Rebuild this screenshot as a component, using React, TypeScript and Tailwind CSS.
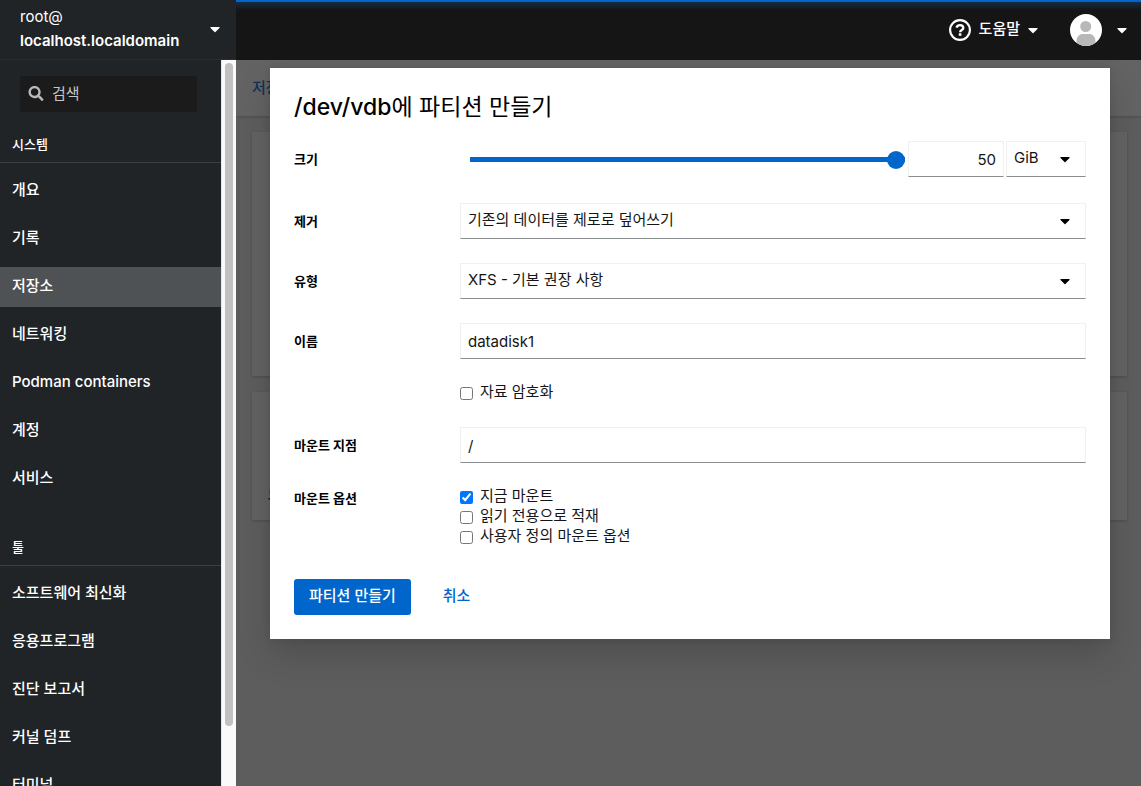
import React, { useState } from 'react';
import { FaCaretDown, FaSearch } from 'react-icons/fa';

const systemItems = ['개요', '기록', '저장소', '네트워킹', 'Podman containers', '계정', '서비스'];
const toolItems = ['소프트웨어 최신화', '응용프로그램', '진단 보고서', '커널 덤프', '터미널'];

const fieldClass =
  'h-9 border border-[#f0f0f0] border-b-[#8a8d90] bg-white px-[7px] text-[15px] text-[#151515] outline-none focus:border-b-[#06c]';

const NavGroup: React.FC<{ title: string; items: string[]; active?: string }> = ({ title, items, active }) => (
  <section>
    <h2 className="border-b border-[#3c3f42] px-3 pt-[22px] pb-2 text-[13px] leading-5 font-medium">{title}</h2>
    <ul className="space-y-2 py-2">
      {items.map((item) => (
        <li key={item}>
          <a
            href="#"
            className={`block h-10 px-3 text-[15px] leading-[38px] font-medium hover:bg-[#3c3f42] ${item === active ? 'bg-[#4f5255]' : ''}`}
          >
            {item}
          </a>
        </li>
      ))}
    </ul>
  </section>
);

const Sidebar: React.FC = () => (
  <aside className="flex w-[236px] shrink-0 flex-col bg-[#212427] text-white">
    <button className="flex h-[60px] w-full shrink-0 items-center justify-between border-b border-[#292e34] pr-[13px] pb-0.5 pl-5 text-left text-[15px] leading-6">
      <span>
        root@
        <br />
        <span className="font-semibold">localhost.localdomain</span>
      </span>
      <FaCaretDown size={16} />
    </button>
    <div className="flex min-h-0 flex-1">
      <nav className="min-w-0 flex-1 overflow-hidden">
        <label className="mt-4 mr-6 ml-5 flex h-9 items-center gap-2 rounded-[3px] bg-[#1b1b1b] px-2 text-[#b8bbbe]">
          <FaSearch size={16} className="shrink-0 pb-px" />
          <input
            type="text"
            aria-label="검색"
            placeholder="검색"
            className="w-full min-w-0 bg-transparent text-[15px] outline-none placeholder:text-[#c7c7c7]"
          />
        </label>
        <NavGroup title="시스템" items={systemItems} active="저장소" />
        <div className="h-2" />
        <NavGroup title="툴" items={toolItems} />
      </nav>
      {/* Scrollbar */}
      <div className="w-[15px] border-l border-[#e8e8e8] bg-[#fafafa] px-[3px] pt-[3px]">
        <div className="h-11/12 rounded-full bg-[#c1c1c1]" />
      </div>
    </div>
  </aside>
);

const HelpIcon: React.FC = () => (
  <svg width="22" height="22" viewBox="0 0 22 22" fill="none" stroke="currentColor">
    <circle cx="11" cy="11" r="9.9" strokeWidth="2.1" />
    <path d="M7.5 8.700C8 7.200 9.200 6.200 11 6.200c1.900 0 3.300 1.100 3.300 2.700 0 2.200-3.200 2.100-3.200 4.300" strokeWidth="2.3" />
    <rect x="9.8" y="14.3" width="2.6" height="2.5" fill="currentColor" stroke="none" />
  </svg>
);

const Avatar: React.FC = () => (
  <svg width="32" height="32" viewBox="0 0 32 32">
    <defs>
      <clipPath id="avatar-clip">
        <circle cx="16" cy="16" r="16" />
      </clipPath>
    </defs>
    <g clipPath="url(#avatar-clip)">
      <rect width="32" height="32" fill="#fff" />
      <circle cx="15.700" cy="12.5" r="5.500" fill="#b8b8b8" />
      <path d="M6.5 32v-4.500c0-5 3-7.500 6.500-7.500h6c3.500 0 6.500 2.500 6.500 7.500v4.500z" fill="#b8b8b8" />
    </g>
  </svg>
);

const Masthead: React.FC = () => (
  <header className="h-[60px] shrink-0 bg-[#151515] text-white">
    <div className="h-0.5 bg-[#06c]" />
    <div className="h-[58px] bg-linear-to-b from-[#122c46] to-[#151515] to-[8px]">
      <div className="flex h-14 items-center justify-end gap-[29px] pr-[11px]">
        <button className="flex items-center gap-2 text-[15px] font-medium">
          <HelpIcon />
          <span className="flex items-center gap-[5px] pb-0.5">
            도움말
            <FaCaretDown size={16} className="mt-0.5" />
          </span>
        </button>
        <button aria-label="root" className="flex items-center gap-3">
          <Avatar />
          <FaCaretDown size={16} />
        </button>
      </div>
    </div>
  </header>
);

const FormRow: React.FC<{ label?: string; id?: string; children: React.ReactNode }> = ({ label, id, children }) => (
  <div className="flex">
    <div className="w-[166px] shrink-0 text-[13px] leading-[37px] font-bold">{label && <label htmlFor={id}>{label}</label>}</div>
    <div className="min-w-0 flex-1">{children}</div>
  </div>
);

const Select: React.FC<{ id?: string; label?: string; options: string[] }> = ({ id, label, options }) => (
  <div className="relative h-9 w-full">
    <select id={id} aria-label={label} className={`w-full appearance-none pb-px ${fieldClass}`}>
      {options.map((option) => (
        <option key={option}>{option}</option>
      ))}
    </select>
    <FaCaretDown size={16} className="pointer-events-none absolute top-2.5 right-[13px]" />
  </div>
);

const Check: React.FC<{ label: string; checked?: boolean }> = ({ label, checked }) => (
  <label className="flex h-5 items-center gap-[7px] text-[15px] leading-5 text-[#151515]">
    <input type="checkbox" defaultChecked={checked} className="size-[13px] accent-[#0075ff]" />
    <span className="pb-0.5">{label}</span>
  </label>
);

const PartitionDialog: React.FC = () => {
  const max = 50;
  const [size, setSize] = useState(max);
  const fill = (size / max) * 100;

  return (
    <div
      role="dialog"
      aria-labelledby="dialog-title"
      className="mx-auto w-full max-w-[840px] bg-white p-6 text-black shadow-[0_16px_32px_rgba(3,3,3,0.16),0_0_8px_rgba(3,3,3,0.1)]"
    >
      <h1 id="dialog-title" className="mb-[18px] text-[23px] leading-[31px]">
        <span className="font-medium">/dev/vdb</span>에 파티션 만들기
      </h1>
      <form onSubmit={(e) => e.preventDefault()}>
        <div className="space-y-6">
          <FormRow label="크기" id="size">
            <div className="flex h-[38px] items-start">
              <input
                type="range"
                aria-label="크기"
                min={0}
                max={max}
                value={size}
                onChange={(e) => setSize(Number(e.target.value))}
                className="my-4 mr-[3px] ml-2.5 h-[5px] min-w-0 flex-1 appearance-none [&::-webkit-slider-thumb]:size-[18px] [&::-webkit-slider-thumb]:appearance-none [&::-webkit-slider-thumb]:rounded-full [&::-webkit-slider-thumb]:bg-[#06c]"
                style={{ background: `linear-gradient(to right, #06c ${fill}%, #d2d2d2 ${fill}%)` }}
              />
              <input
                id="size"
                type="text"
                value={size}
                onChange={(e) => setSize(Math.min(max, Number(e.target.value) || 0))}
                className={`mr-0.5 w-24 text-right ${fieldClass}`}
              />
              <div className="w-20">
                <Select label="단위" options={['GiB', 'MiB']} />
              </div>
            </div>
          </FormRow>
          <div className="space-y-[23px]">
            <FormRow label="제거" id="erase">
              <Select id="erase" options={['기존의 데이터를 제로로 덮어쓰기', '기존의 데이터를 덮어쓰지 않기']} />
            </FormRow>
            <FormRow label="유형" id="type">
              <Select id="type" options={['XFS - 기본 권장 사항', 'EXT4']} />
            </FormRow>
            <FormRow label="이름" id="name">
              <input id="name" type="text" defaultValue="datadisk1" className={`w-full ${fieldClass}`} />
            </FormRow>
            <FormRow>
              <Check label="자료 암호화" />
            </FormRow>
          </div>
          <FormRow label="마운트 지점" id="mount-point">
            <input id="mount-point" type="text" defaultValue="/" className={`w-full ${fieldClass}`} />
          </FormRow>
          <fieldset className="-mt-px flex">
            <legend className="float-left w-[166px] text-[13px] leading-[22px] font-bold">마운트 옵션</legend>
            <div>
              <Check label="지금 마운트" checked />
              <Check label="읽기 전용으로 적재" />
              <Check label="사용자 정의 마운트 옵션" />
            </div>
          </fieldset>
        </div>
        <div className="mt-8 flex gap-4 text-[15px] font-medium">
          <button type="submit" className="h-9 rounded-[3px] bg-[#06c] px-[15px] pb-0.5 text-white hover:bg-[#004080]">
            파티션 만들기
          </button>
          <button type="button" className="h-9 px-4 pb-0.5 text-[#06c] hover:text-[#004080]">
            취소
          </button>
        </div>
      </form>
    </div>
  );
};

const StoragePage: React.FC = () => (
  <main className="relative flex-1 overflow-hidden bg-[#f0f0f0] text-[#151515]">
    <div className="flex h-14 items-center bg-white px-4 text-[15px] font-medium shadow-[0_1px_3px_rgba(3,3,3,0.2)]">
      <a href="#" className="text-[#2b7fd0]">
        저장소
      </a>
    </div>
    <div className="space-y-4 py-4 pr-3.5 pl-4">
      <div className="h-[244px] bg-white shadow-[0_1px_3px_rgba(3,3,3,0.2)]" />
      <div className="flex h-32 items-end bg-white p-4 text-[13px] font-bold shadow-[0_1px_3px_rgba(3,3,3,0.2)]">
        드라이브
      </div>
    </div>
    <div className="absolute inset-0 bg-[rgba(3,3,3,0.62)] pt-2 pr-[31px] pl-[34px]">
      <PartitionDialog />
    </div>
  </main>
);

export default function App() {
  return (
    <div className="flex h-screen overflow-hidden font-['Inter','Noto_Sans_CJK_KR',sans-serif]">
      <Sidebar />
      <div className="flex min-w-0 flex-1 flex-col">
        <Masthead />
        <StoragePage />
      </div>
    </div>
  );
}
